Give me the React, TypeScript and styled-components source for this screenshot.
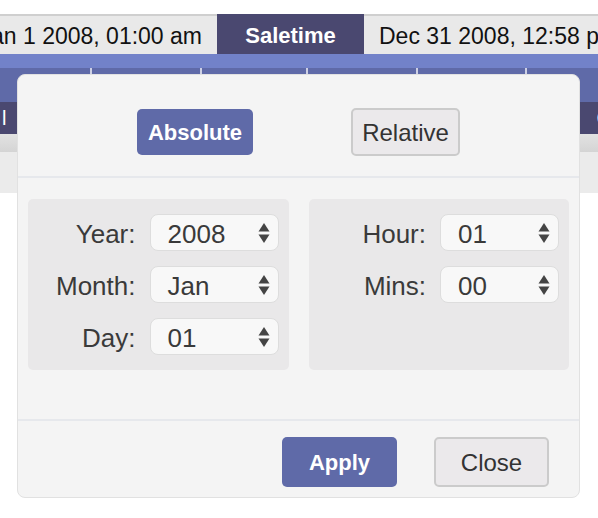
import styled, { createGlobalStyle } from "styled-components";
import { FunctionComponent } from "react";

const GlobalStyle = createGlobalStyle`
  body {
    margin: 0;
    background: #ffffff;
    font-family: "Liberation Sans", Arial, sans-serif;
  }
`;

const Page = styled.div`
  position: relative;
  width: 598px;
  height: 518px;
  overflow: hidden;
  padding-top: 14px;
  box-sizing: border-box;
  background: #ffffff;
`;

const TabBar = styled.div`
  display: flex;
  height: 40px;
  overflow: hidden;
  white-space: nowrap;
`;

const Tab = styled.div<{ $active?: boolean; $width?: number; $alignEnd?: boolean }>`
  display: flex;
  align-items: center;
  flex-shrink: 0;
  overflow: hidden;
  box-sizing: border-box;
  padding: 2px 15px 0;
  width: ${(p) => (p.$width ? `${p.$width}px` : "auto")};
  justify-content: ${(p) => (p.$active ? "center" : p.$alignEnd ? "flex-end" : "flex-start")};
  font-size: ${(p) => (p.$active ? 22 : 23)}px;
  font-weight: ${(p) => (p.$active ? 700 : 400)};
  color: ${(p) => (p.$active ? "#ffffff" : "#111111")};
  background: ${(p) => (p.$active ? "#4a4870" : "#e9e9e9")};
  border-top: 2px solid ${(p) => (p.$active ? "#4a4870" : "#cfcfcf")};
`;

const Band = styled.div`
  height: 14px;
  background: #7282c9;
`;

const HeaderRow = styled.div`
  display: grid;
  grid-template-columns: 90px 110px 106px 110px 109px 1fr;
  height: 34px;
  background: #5f6aa8;
`;

const HeaderCell = styled.div<{ $first?: boolean }>`
  border-left: ${(p) => (p.$first ? "none" : "2px solid #cdd0e4")};
`;

const SubHeader = styled.div`
  display: flex;
  justify-content: space-between;
  align-items: center;
  height: 32px;
  padding: 0 0 0 2px;
  background: #4a4870;
  color: #ffffff;
  font-size: 20px;
  overflow: hidden;
`;

const Glyph = styled.span<{ $right?: boolean }>`
  margin-right: ${(p) => (p.$right ? "-13px" : "0")};
`;

const GrayStrip = styled.div`
  height: 18px;
  background: linear-gradient(#e2e2e2, #d4d4d4);
`;

const LightStrip = styled.div`
  height: 41px;
  background: #ebebeb;
`;

const Popup = styled.div`
  position: absolute;
  left: 17px;
  top: 74px;
  width: 563px;
  height: 424px;
  box-sizing: border-box;
  display: flex;
  flex-direction: column;
  background: #f4f4f4;
  border: 1px solid #e1e1e1;
  border-radius: 8px;
`;

const ModeBar = styled.div`
  display: flex;
  justify-content: center;
  align-items: center;
  gap: 98px;
  height: 103px;
  padding-top: 12px;
  box-sizing: border-box;
  border-bottom: 2px solid #e6e8ec;
`;

const Button = styled.button<{ $primary?: boolean; $width: number; $height: number }>`
  width: ${(p) => p.$width}px;
  height: ${(p) => p.$height}px;
  box-sizing: border-box;
  padding: 2px 0 0;
  font-family: "Liberation Sans", Arial, sans-serif;
  font-size: ${(p) => (p.$primary ? 22 : 24)}px;
  font-weight: ${(p) => (p.$primary ? 700 : 400)};
  color: ${(p) => (p.$primary ? "#ffffff" : "#333333")};
  background: ${(p) => (p.$primary ? "#5f6aa8" : "#ebe9eb")};
  border: ${(p) => (p.$primary ? "none" : "2px solid #cbcbcb")};
  border-radius: 5px;
`;

const Fields = styled.div`
  display: flex;
  gap: 20px;
  padding: 21px 10px 0 10px;
  height: 243px;
  box-sizing: border-box;
  border-bottom: 2px solid #e6e8ec;
`;

const Panel = styled.div<{ $selectWidth: number }>`
  flex: 1;
  display: grid;
  grid-template-columns: 1fr ${(p) => p.$selectWidth}px;
  grid-auto-rows: 37px;
  align-content: start;
  column-gap: 14px;
  row-gap: 15px;
  height: 171px;
  box-sizing: border-box;
  padding: 15px 10px 15px 0;
  background: #e9e8e9;
  border-radius: 5px;
`;

const Label = styled.label`
  display: flex;
  align-items: center;
  justify-content: flex-end;
  padding-top: 3px;
  font-size: 26px;
  color: #3a3a3a;
`;

const Select = styled.div`
  display: flex;
  align-items: center;
  justify-content: space-between;
  box-sizing: border-box;
  padding: 0 8px 0 17px;
  background: #f8f8f8;
  border: 1px solid #dddddd;
  border-radius: 8px;
  font-size: 26px;
  color: #3a3a3a;
`;

const Value = styled.span`
  padding-top: 3px;
`;

const Footer = styled.div`
  display: flex;
  justify-content: flex-end;
  align-items: flex-start;
  gap: 37px;
  padding: 16px 30px 0 0;
`;

const Arrows: FunctionComponent = () => (
  <svg width="12" height="22" viewBox="0 0 12 22">
    <polygon points="6,1 11.5,9.5 0.5,9.5" fill="#444444" />
    <polygon points="0.5,12.5 11.5,12.5 6,21" fill="#444444" />
  </svg>
);

interface IFieldProps {
  label: string;
  value: string;
}

const Field: FunctionComponent<IFieldProps> = ({ label, value }) => (
  <>
    <Label>{label}</Label>
    <Select>
      <Value>{value}</Value>
      <Arrows />
    </Select>
  </>
);

const App: FunctionComponent = () => {
  return (
    <Page>
      <GlobalStyle />
      <TabBar>
        <Tab $width={217} $alignEnd>
          Jan 1 2008, 01:00 am
        </Tab>
        <Tab $active $width={147}>
          Saletime
        </Tab>
        <Tab>Dec 31 2008, 12:58 pm</Tab>
      </TabBar>
      <Band />
      <HeaderRow>
        <HeaderCell $first />
        <HeaderCell />
        <HeaderCell />
        <HeaderCell />
        <HeaderCell />
        <HeaderCell />
      </HeaderRow>
      <SubHeader>
        <Glyph>l</Glyph>
        <Glyph $right>C</Glyph>
      </SubHeader>
      <GrayStrip />
      <LightStrip />

      <Popup>
        <ModeBar>
          <Button $primary $width={116} $height={46}>
            Absolute
          </Button>
          <Button $width={109} $height={48}>
            Relative
          </Button>
        </ModeBar>
        <Fields>
          <Panel $selectWidth={129}>
            <Field label="Year:" value="2008" />
            <Field label="Month:" value="Jan" />
            <Field label="Day:" value="01" />
          </Panel>
          <Panel $selectWidth={119}>
            <Field label="Hour:" value="01" />
            <Field label="Mins:" value="00" />
          </Panel>
        </Fields>
        <Footer>
          <Button $primary $width={115} $height={50}>
            Apply
          </Button>
          <Button $width={115} $height={50}>
            Close
          </Button>
        </Footer>
      </Popup>
    </Page>
  );
};

export default App;
